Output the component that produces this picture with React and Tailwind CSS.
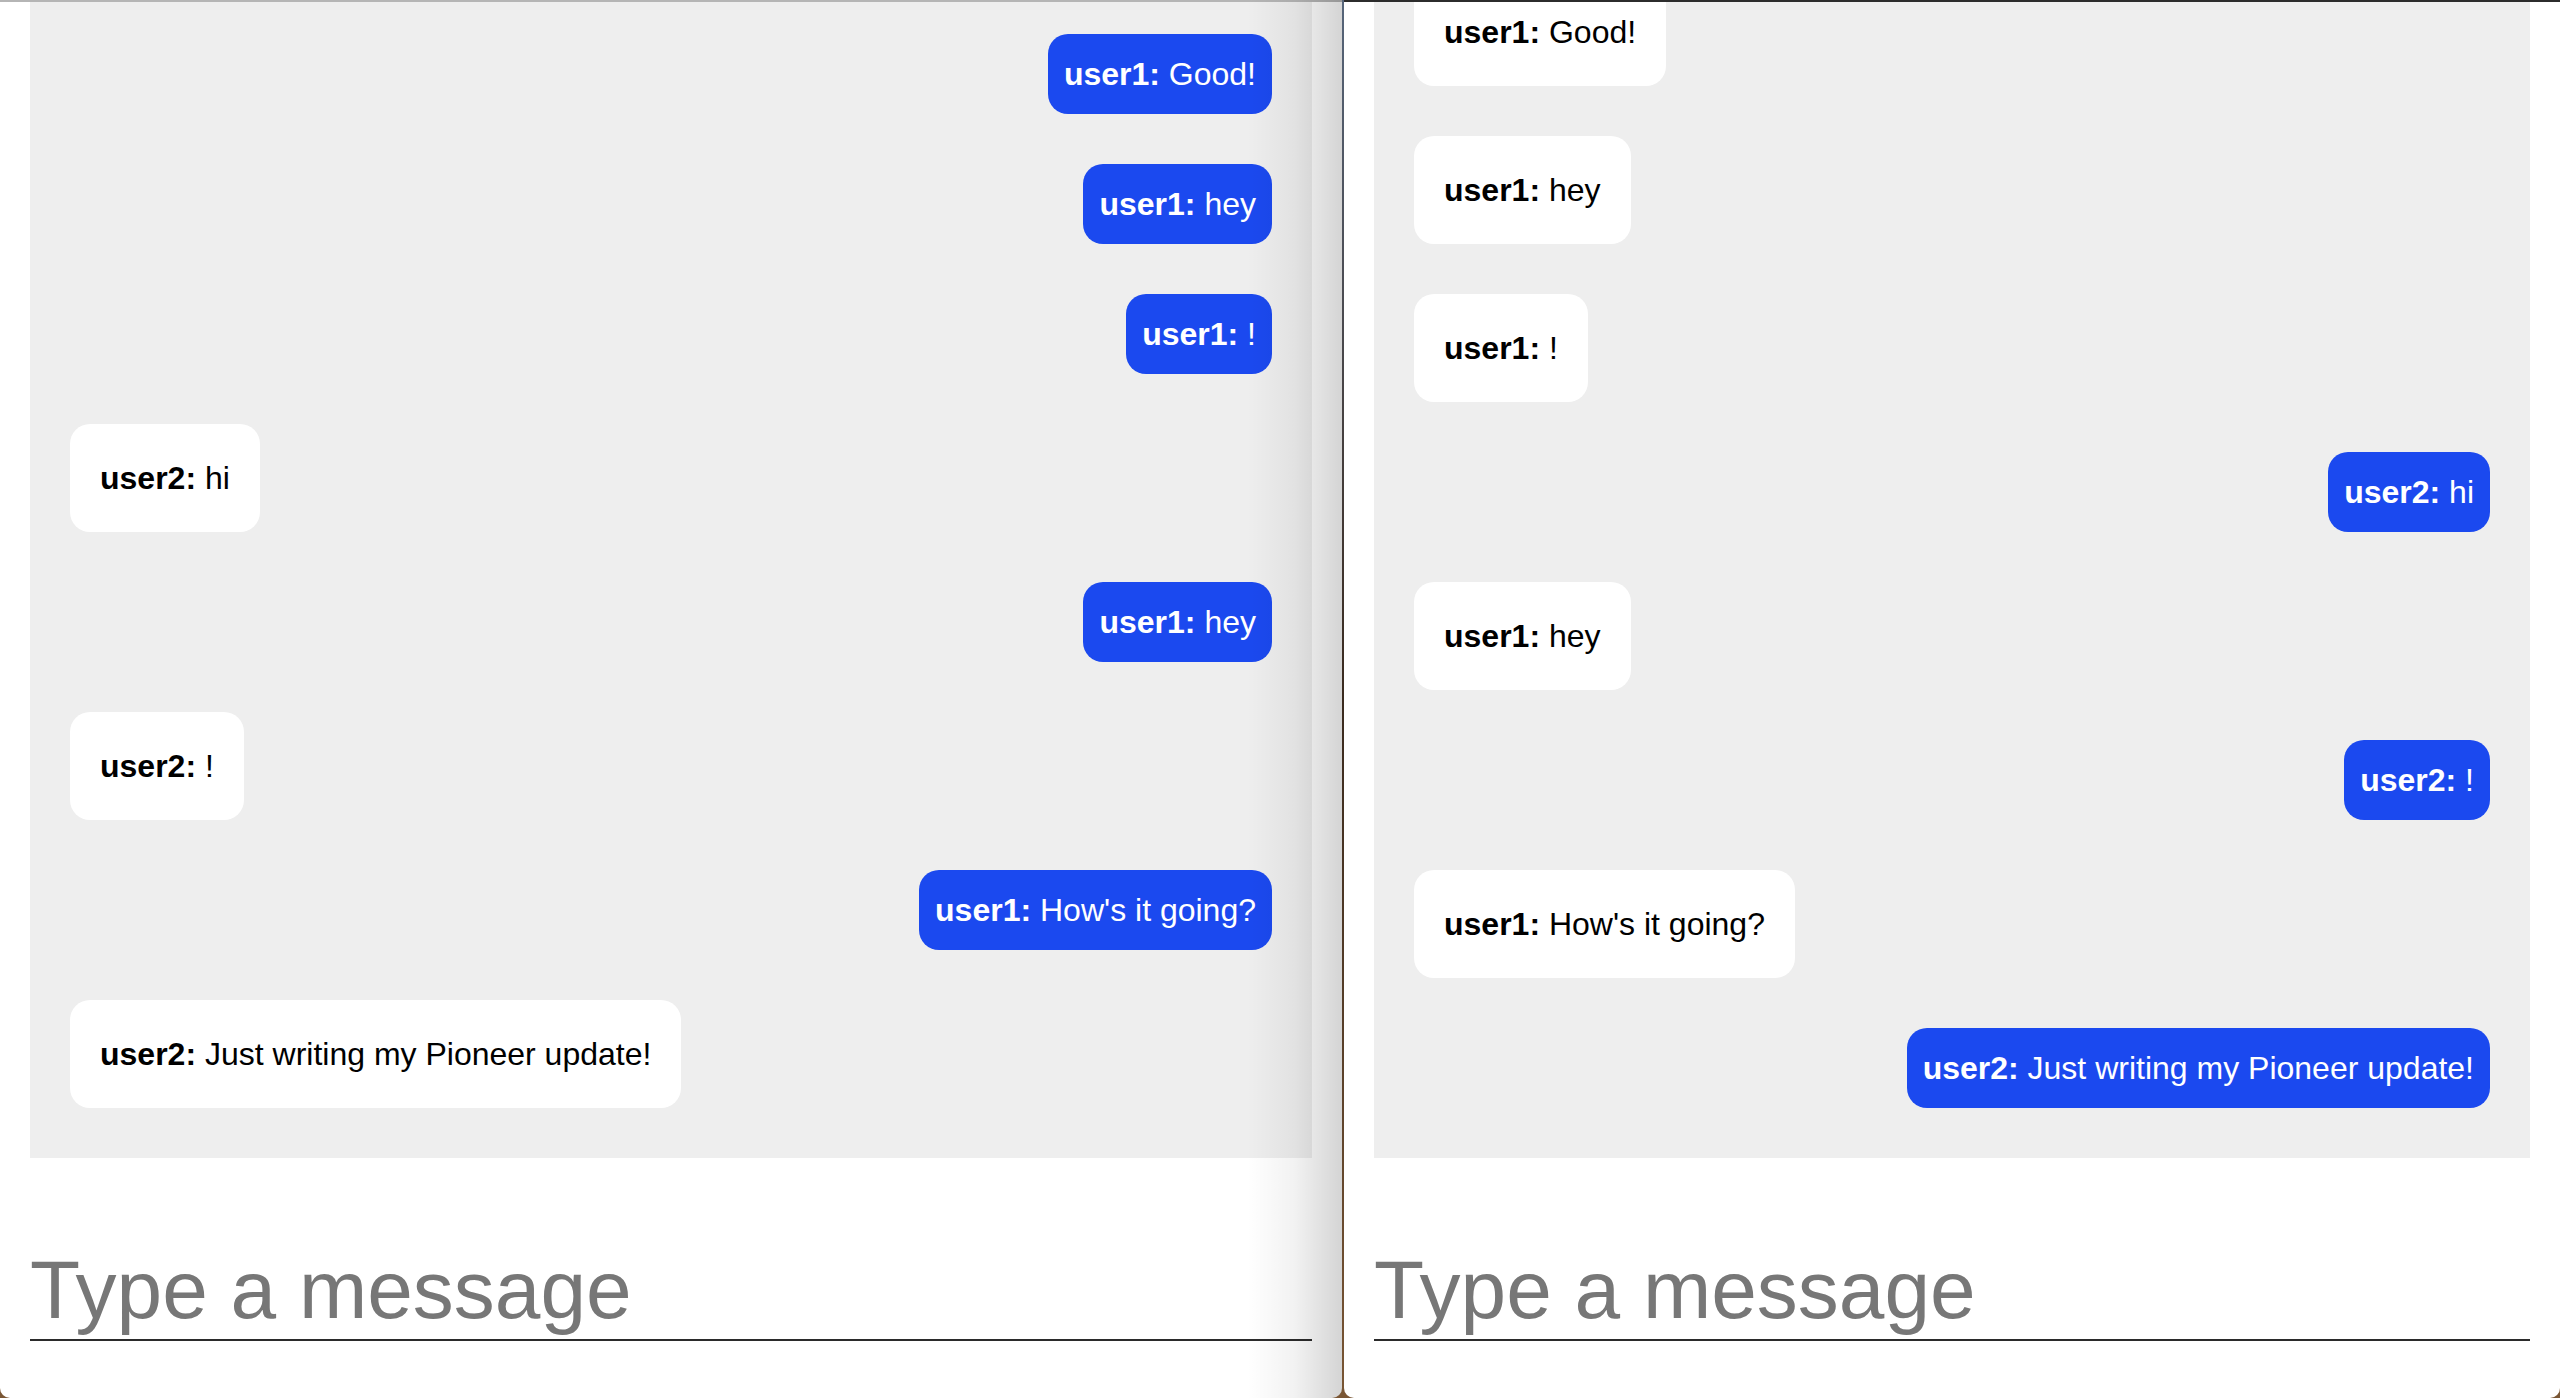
import React from "react";

const leftMessages = [
  { user: "user1", text: "Good!", mine: true },
  { user: "user1", text: "hey", mine: true },
  { user: "user1", text: "!", mine: true },
  { user: "user2", text: "hi", mine: false },
  { user: "user1", text: "hey", mine: true },
  { user: "user2", text: "!", mine: false },
  { user: "user1", text: "How's it going?", mine: true },
  { user: "user2", text: "Just writing my Pioneer update!", mine: false },
];

const rightMessages = leftMessages.map((m) => ({ ...m, mine: !m.mine }));

function Bubble({ user, text, mine }) {
  if (mine) {
    return (
      <div className="self-end shrink-0 rounded-[20px] bg-[#1b49ef] px-[16px] py-[21px] text-[32px] leading-[38px] text-white whitespace-nowrap">
        <span className="font-bold">{user}:</span> {text}
      </div>
    );
  }
  return (
    <div className="self-start shrink-0 rounded-[20px] bg-white px-[30px] py-[35px] text-[32px] leading-[38px] text-black whitespace-nowrap">
      <span className="font-bold">{user}:</span> {text}
    </div>
  );
}

function ChatWindow({ messages, topBorder, shadow, width }) {
  return (
    <div
      className={`relative flex h-full flex-col overflow-hidden rounded-b-[10px] bg-white ${width}`}
    >
      <div className={`h-[2px] shrink-0 ${topBorder}`} />
      <div className="mx-[30px] flex h-[1156px] shrink-0 flex-col justify-end gap-[50px] overflow-hidden bg-[#eeeeee] px-[40px] pb-[50px]">
        {messages.map((m, i) => (
          <Bubble key={i} {...m} />
        ))}
      </div>
      <div className="flex-1 px-[30px] pt-[81px]">
        <input
          type="text"
          placeholder="Type a message"
          className="block h-[102px] w-full border-b-2 border-[#2b2b2b] bg-transparent p-0 text-[82px] text-black outline-none placeholder:text-[#777777]"
        />
      </div>
      {shadow && (
        <div className="pointer-events-none absolute inset-y-0 right-0 w-[95px] bg-linear-to-r from-transparent via-[rgba(0,0,0,0.05)] to-[rgba(0,0,0,0.17)]" />
      )}
    </div>
  );
}

export default function App() {
  return (
    <div
      className="flex h-[1398px] w-[2560px] overflow-hidden bg-[#7a5634]"
      style={{ fontFamily: '"Liberation Sans", Helvetica, Arial, sans-serif' }}
    >
      <ChatWindow
        messages={leftMessages}
        topBorder="bg-[#b5b5b5]"
        shadow
        width="w-[1342px] shrink-0"
      />
      <div className="h-full w-[2px] shrink-0 bg-linear-to-b from-[#56657a] via-[#3a2a1e] to-[#7a5634]" />
      <ChatWindow
        messages={rightMessages}
        topBorder="bg-[#2c2c2c]"
        width="w-[1216px] shrink-0"
      />
    </div>
  );
}
